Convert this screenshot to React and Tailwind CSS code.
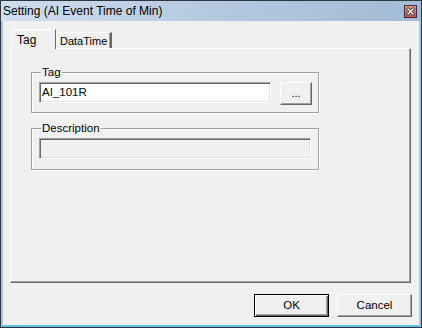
import React from "react";

function CloseIcon() {
  return (
    <svg width="13" height="13" viewBox="0 0 13 13">
      <defs>
        <linearGradient id="cg" x1="0" y1="0" x2="0" y2="1">
          <stop offset="0" stopColor="#e09a90" />
          <stop offset="1" stopColor="#b9574b" />
        </linearGradient>
      </defs>
      <rect x="0.5" y="0.5" width="12" height="12" fill="url(#cg)" stroke="#4b2633" />
      <path d="M4 4 L9 9 M9 4 L4 9" stroke="#3a2a2a" strokeWidth="3" strokeLinecap="square" />
      <path d="M4 4 L9 9 M9 4 L4 9" stroke="#ffffff" strokeWidth="1.4" strokeLinecap="square" />
    </svg>
  );
}

export default function App() {
  return (
    <div className="w-[422px] h-[328px] border border-[#2f3740] flex flex-col font-['Liberation_Sans',sans-serif] text-[11px] text-black leading-[13px]">
      <div className="h-[20px] flex items-center justify-between pl-[2px] pr-[4px] bg-gradient-to-r from-[#d0deee] via-[#b4c9e0] to-[#a2bbd6]">
        <span className="text-[12px] leading-[14px]">Setting (AI Event Time of Min)</span>
        <CloseIcon />
      </div>
      <div className="flex-1 flex flex-col bg-[#f0f0f0] border-x-2 border-b-2 border-x-[#a9c3de] border-b-[#5fc1ea] pl-[7px] pr-[7px] pt-[8px]">
        <div className="flex items-end pl-[2px]">
          <div className="relative z-10 -mb-px h-[20px] w-[44px] bg-[#f0f0f0] border-t border-l border-white border-r border-r-[#696969] pl-[4px] pt-[4px] text-[12px]">
            Tag
          </div>
          <div className="h-[16px] w-[56px] border-t border-l border-white border-r-2 border-r-[#696969] shadow-[inset_-1px_0_0_#a0a0a0] pl-[3px] pt-[2px] text-[11px]">
            DataTime
          </div>
        </div>
        <div className="h-[235px] w-[401px] border-t border-l border-white border-r border-b border-r-[#696969] border-b-[#696969] shadow-[inset_-1px_-1px_0_#a0a0a0] pl-[20px] pt-[17px]">
          <fieldset className="w-[288px] border border-[#a0a0a0] shadow-[inset_1px_1px_0_#fff,1px_1px_0_#fff] pl-[7px] pr-[5px] pt-[3px] pb-[7px]">
            <legend className="ml-[2px] px-px leading-[13px] text-[11.5px]">Tag</legend>
            <div className="flex items-start">
              <div className="w-[232px] h-[21px] bg-white border-t border-l border-[#a0a0a0] border-r border-b border-r-white border-b-white shadow-[inset_1px_1px_0_#696969,inset_-1px_-1px_0_#e3e3e3] pl-[2px] flex items-center text-[11.5px]">
                AI_101R
              </div>
              <div className="ml-[9px] w-[32px] h-[23px] border-t border-l border-white border-r border-b border-r-[#696969] border-b-[#696969] shadow-[inset_-1px_-1px_0_#a0a0a0] flex items-center justify-center leading-none">
                ...
              </div>
            </div>
          </fieldset>
          <fieldset className="mt-[9px] w-[288px] border border-[#a0a0a0] shadow-[inset_1px_1px_0_#fff,1px_1px_0_#fff] pl-[7px] pr-[5px] pt-[3px] pb-[10px]">
            <legend className="ml-[2px] px-px leading-[13px] text-[11.5px]">Description</legend>
            <div className="w-[272px] h-[21px] bg-[#f0f0f0] border-t border-l border-[#a0a0a0] border-r border-b border-r-white border-b-white shadow-[inset_1px_1px_0_#696969,inset_-1px_-1px_0_#e3e3e3]"></div>
          </fieldset>
        </div>
        <div className="mt-[11px] flex justify-end gap-[8px]">
          <div className="w-[75px] h-[23px] border border-black shadow-[inset_1px_1px_0_#fff,inset_-1px_-1px_0_#696969,inset_-2px_-2px_0_#a0a0a0] flex items-center justify-center text-[11.5px]">
            OK
          </div>
          <div className="w-[75px] h-[23px] border-t border-l border-white border-r border-b border-r-[#696969] border-b-[#696969] shadow-[inset_-1px_-1px_0_#a0a0a0] flex items-center justify-center text-[11.5px]">
            Cancel
          </div>
        </div>
      </div>
    </div>
  );
}
